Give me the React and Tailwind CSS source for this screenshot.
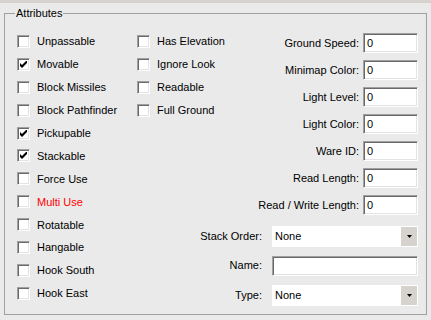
import React from "react";

const leftFlags = [
  { label: "Unpassable" },
  { label: "Movable", checked: true },
  { label: "Block Missiles" },
  { label: "Block Pathfinder" },
  { label: "Pickupable", checked: true },
  { label: "Stackable", checked: true },
  { label: "Force Use" },
  { label: "Multi Use", red: true },
  { label: "Rotatable" },
  { label: "Hangable" },
  { label: "Hook South" },
  { label: "Hook East" },
];

const midFlags = [
  { label: "Has Elevation" },
  { label: "Ignore Look" },
  { label: "Readable" },
  { label: "Full Ground" },
];

const numberFields = [
  "Ground Speed:",
  "Minimap Color:",
  "Light Level:",
  "Light Color:",
  "Ware ID:",
  "Read Length:",
  "Read / Write Length:",
];

const sunken =
  "border border-t-[#a0a0a0] border-l-[#a0a0a0] border-b-white border-r-white shadow-[inset_1px_1px_0_#696969,inset_-1px_-1px_0_#e3e3e3] bg-white";

const CheckBox = ({ label, checked, red }) => (
  <div className="flex h-[22.9px] items-center gap-[7px]">
    <div className={`flex h-[13px] w-[13px] shrink-0 items-center justify-center ${sunken}`}>
      {checked && (
        <svg width="7" height="7" viewBox="0 0 7 7">
          <polygon points="0,2 2,4 7,-1 7,2 2,7 0,5" fill="#000" />
        </svg>
      )}
    </div>
    <span className={`pt-px ${red ? "text-[#ff0000]" : "text-black"}`}>{label}</span>
  </div>
);

const Select = ({ value }) => (
  <div className="flex h-[21px] w-[146px] items-center bg-white pl-[3px]">
    <span className="flex-1 text-black">{value}</span>
    <div className="mr-px flex h-[19px] w-[16px] items-center justify-center bg-[#d6d3ce]">
      <svg width="5" height="3" viewBox="0 0 5 3">
        <polygon points="0,0 5,0 2.5,3" fill="#000" />
      </svg>
    </div>
  </div>
);

export default function App() {
  return (
    <div
      className="h-[320px] w-[431px] overflow-hidden bg-[#eaeaea] text-[11px] leading-none"
      style={{ fontFamily: '"Liberation Sans", Arial, sans-serif' }}
    >
      <div className="h-[3px] bg-[#d6d3ce]" />
      <div className="relative ml-[4px] mt-[10px] h-[302px] w-[423px] border border-[#a0a0a0]">
        <span className="absolute left-[10px] top-[-6px] bg-[#eaeaea] px-[1px] text-black">Attributes</span>

        <div className="flex pl-[12px] pr-[8px] pt-[16px]">
          <div className="w-[120px] shrink-0">
            {leftFlags.map((f) => (
              <CheckBox key={f.label} {...f} />
            ))}
          </div>

          <div className="flex flex-1 flex-col">
            <div className="flex">
              <div className="flex-1">
                {midFlags.map((f) => (
                  <CheckBox key={f.label} {...f} />
                ))}
              </div>
              <div className="flex flex-col gap-[7px] pt-[3px]">
                {numberFields.map((label) => (
                  <div key={label} className="flex h-[20px] items-center justify-end gap-[4px]">
                    <span className="pt-px text-black">{label}</span>
                    <div className={`flex h-[20px] w-[55px] items-center pl-[3px] ${sunken}`}>0</div>
                  </div>
                ))}
              </div>
            </div>

            <div className="mt-[10.5px] flex flex-col items-end">
              <div className="flex items-center gap-[10px]">
                <span className="text-black">Stack Order:</span>
                <Select value="None" />
              </div>
              <div className="mt-[9px] flex items-center gap-[10px]">
                <span className="text-black">Name:</span>
                <div className={`h-[20px] w-[146px] ${sunken}`} />
              </div>
              <div className="mt-[9px] flex items-center gap-[10px]">
                <span className="text-black">Type:</span>
                <Select value="None" />
              </div>
            </div>
          </div>
        </div>
      </div>
    </div>
  );
}
